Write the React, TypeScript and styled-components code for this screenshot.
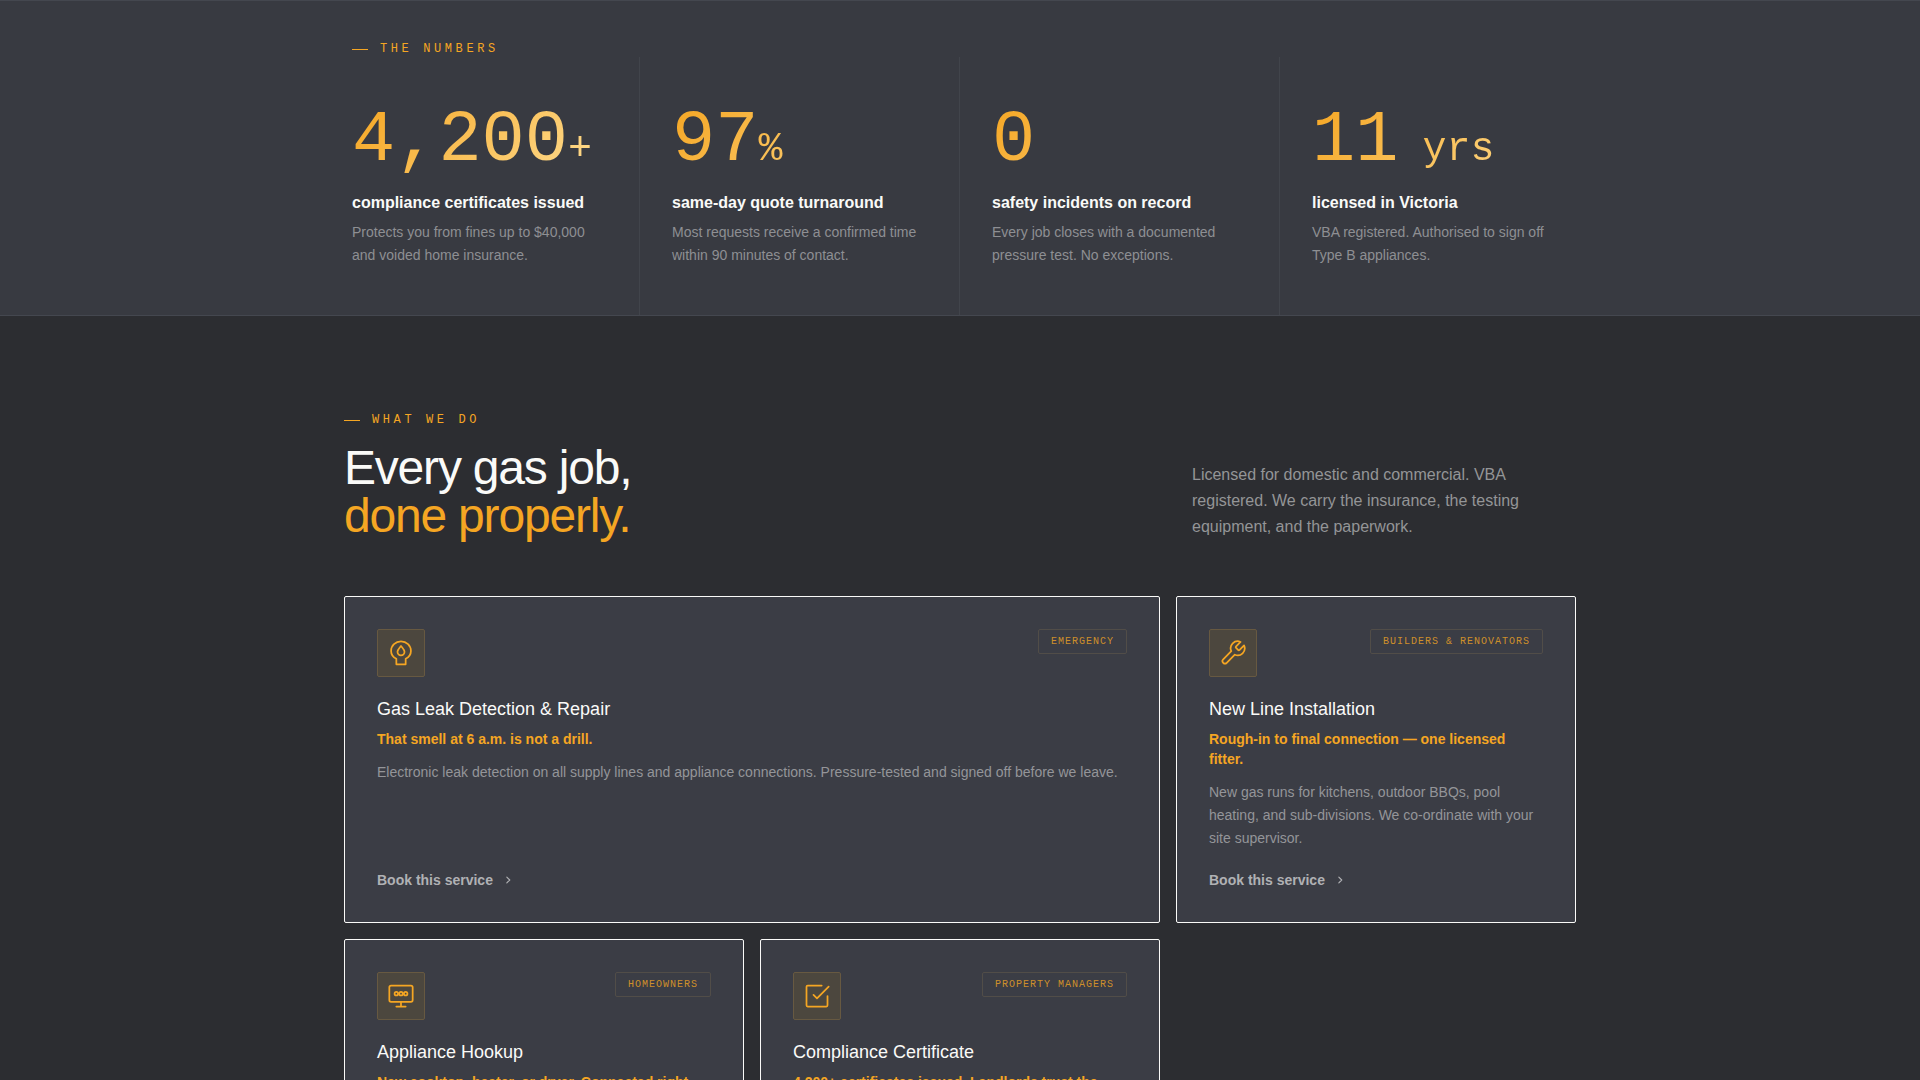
import React from "react";
import styled, { createGlobalStyle } from "styled-components";

const sans = `"Liberation Sans", Arial, sans-serif`;
const mono = `"Liberation Mono", "Courier New", monospace`;
const amber = "#f5a623";

const GlobalStyle = createGlobalStyle`
  *, *::before, *::after { box-sizing: border-box; }
  body {
    margin: 0;
    background: #2c2d31;
    color: #fafaf8;
    font-family: ${sans};
  }
  h2, h3, p { margin: 0; font-weight: 400; }
`;

const Eyebrow = styled.p`
  display: flex;
  align-items: center;
  gap: 12px;
  color: ${amber};
  font-family: ${mono};
  font-size: 12px;
  line-height: 16px;
  letter-spacing: 0.3em;
  text-transform: uppercase;

  &::before {
    content: "";
    width: 16px;
    height: 1px;
    background: ${amber};
  }
`;

const NumbersBand = styled.section`
  background: #383a41;
  border-top: 1px solid #44474f;
  border-bottom: 1px solid #44474f;
  padding-top: 40px;
`;

const NumbersInner = styled.div`
  max-width: 1280px;
  margin: 0 auto;

  & > ${Eyebrow} { padding: 0 32px; }
`;

const StatGrid = styled.div`
  display: grid;
  grid-template-columns: repeat(4, 1fr);
`;

const Stat = styled.article`
  padding: 48px 32px;
  border-right: 1px solid #41444b;

  &:last-child { border-right: 0; }
`;

const Figure = styled.div`
  font-family: ${mono};
  font-size: 72px;
  line-height: 72px;
  white-space: pre;
  background: linear-gradient(135deg, #f5a623 0%, #ffde94 100%);
  background-clip: text;
  -webkit-background-clip: text;
  color: transparent;
`;

const Unit = styled.span`
  font-size: 40px;
  line-height: 40px;
`;

const StatTitle = styled.h3`
  margin-top: 14px;
  font-size: 16px;
  font-weight: 700;
  line-height: 24px;
`;

const StatText = styled.p`
  margin-top: 6px;
  color: #8e8f93;
  font-size: 14px;
  line-height: 23px;
`;

const Services = styled.section`
  max-width: 1280px;
  margin: 0 auto;
  padding: 96px 24px;
`;

const ServicesHeader = styled.header`
  display: flex;
  align-items: flex-end;
  justify-content: space-between;
  margin-bottom: 56px;
`;

const Heading = styled.h2`
  margin-top: 16px;
  font-size: 48px;
  line-height: 48px;
  letter-spacing: -0.025em;
`;

const HeadingAccent = styled.span`
  display: block;
  color: ${amber};
`;

const Intro = styled.p`
  width: 384px;
  color: #949597;
  font-size: 16px;
  line-height: 26px;
`;

const CardGrid = styled.div`
  display: grid;
  grid-template-columns: repeat(3, 1fr);
  gap: 16px;
`;

const Card = styled.article<{ $wide?: boolean }>`
  display: flex;
  flex-direction: column;
  grid-column: span ${(p) => (p.$wide ? 2 : 1)};
  padding: 32px;
  background: #3b3d45;
  border: 1px solid #fafaf8;
  border-radius: 2px;
`;

const CardTop = styled.div`
  display: flex;
  align-items: flex-start;
  justify-content: space-between;
  margin-bottom: 20px;
`;

const IconBox = styled.div`
  display: grid;
  place-items: center;
  width: 48px;
  height: 48px;
  background: #4c473e;
  border: 1px solid #675941;
  border-radius: 2px;
  color: ${amber};
`;

const Tag = styled.span`
  padding: 4px 12px;
  border: 1px solid #514d48;
  border-radius: 2px;
  color: rgba(245, 166, 35, 0.8);
  font-family: ${mono};
  font-size: 10px;
  line-height: 15px;
  letter-spacing: 0.1em;
  text-transform: uppercase;
`;

const CardTitle = styled.h3`
  font-size: 18px;
  line-height: 24px;
`;

const CardHook = styled.p`
  margin-top: 8px;
  color: ${amber};
  font-size: 14px;
  font-weight: 700;
  line-height: 20px;
`;

const CardText = styled.p`
  margin: 12px 0 20px;
  color: #949599;
  font-size: 14px;
  line-height: 23px;
`;

const BookLink = styled.a`
  display: inline-flex;
  align-items: center;
  align-self: flex-start;
  gap: 8px;
  margin-top: auto;
  color: #b0b1b4;
  font-size: 14px;
  font-weight: 700;
  line-height: 20px;
  text-decoration: none;
`;

const Icon = ({ size = 28, width = 1.5, children }: { size?: number; width?: number; children: React.ReactNode }) => (
  <svg
    width={size}
    height={size}
    viewBox="0 0 24 24"
    fill="none"
    stroke="currentColor"
    strokeWidth={width}
    strokeLinecap="round"
    strokeLinejoin="round"
    aria-hidden="true"
  >
    {children}
  </svg>
);

const icons = {
  leak: (
    <>
      <path d="M12 2C7.3 2 3.5 5.7 3.5 10.2c0 3 1.7 5.3 4.5 6.8v4.7h8V17c2.8-1.5 4.5-3.8 4.5-6.8C20.5 5.7 16.7 2 12 2z" />
      <path d="M12 6c-1.6 2-3 3.4-3 5a3 3 0 0 0 6 0c0-1.6-1.4-3-3-5z" />
    </>
  ),
  wrench: (
    <path d="M14.7 6.3a1 1 0 0 0 0 1.4l1.6 1.6a1 1 0 0 0 1.4 0l3.77-3.77a6 6 0 0 1-7.94 7.94l-6.91 6.91a2.12 2.12 0 0 1-3-3l6.91-6.91a6 6 0 0 1 7.94-7.94l-3.76 3.76z" />
  ),
  appliance: (
    <>
      <rect x="2" y="3" width="20" height="14" rx="1.5" />
      <path d="M8 21h8M12 17v4" />
      <circle cx="8" cy="10" r="1.5" />
      <circle cx="12" cy="10" r="1.5" />
      <circle cx="16" cy="10" r="1.5" />
    </>
  ),
  certificate: (
    <>
      <path d="M9 11l3 3L22 4" />
      <path d="M21 12v8a1 1 0 0 1-1 1H4a1 1 0 0 1-1-1V4a1 1 0 0 1 1-1h12" />
    </>
  ),
};

const stats = [
  { figure: "4,200", unit: "+", title: "compliance certificates issued", text: "Protects you from fines up to $40,000 and voided home insurance." },
  { figure: "97", unit: "%", title: "same-day quote turnaround", text: "Most requests receive a confirmed time within 90 minutes of contact." },
  { figure: "0", unit: "", title: "safety incidents on record", text: "Every job closes with a documented pressure test. No exceptions." },
  { figure: "11", unit: " yrs", title: "licensed in Victoria", text: "VBA registered. Authorised to sign off Type B appliances." },
];

const services = [
  {
    icon: icons.leak,
    tag: "Emergency",
    title: "Gas Leak Detection & Repair",
    hook: "That smell at 6 a.m. is not a drill.",
    text: "Electronic leak detection on all supply lines and appliance connections. Pressure-tested and signed off before we leave.",
    wide: true,
  },
  {
    icon: icons.wrench,
    tag: "Builders & Renovators",
    title: "New Line Installation",
    hook: "Rough-in to final connection — one licensed fitter.",
    text: "New gas runs for kitchens, outdoor BBQs, pool heating, and sub-divisions. We co-ordinate with your site supervisor.",
  },
  {
    icon: icons.appliance,
    tag: "Homeowners",
    title: "Appliance Hookup",
    hook: "New cooktop, heater, or dryer. Connected right.",
  },
  {
    icon: icons.certificate,
    tag: "Property Managers",
    title: "Compliance Certificate",
    hook: "4,200+ certificates issued. Landlords trust the",
  },
];

export default function App() {
  return (
    <main>
      <GlobalStyle />
      <NumbersBand>
        <NumbersInner>
          <Eyebrow>The Numbers</Eyebrow>
          <StatGrid>
            {stats.map((s) => (
              <Stat key={s.title}>
                <Figure>
                  {s.figure}
                  {s.unit && <Unit>{s.unit}</Unit>}
                </Figure>
                <StatTitle>{s.title}</StatTitle>
                <StatText>{s.text}</StatText>
              </Stat>
            ))}
          </StatGrid>
        </NumbersInner>
      </NumbersBand>

      <Services>
        <ServicesHeader>
          <div>
            <Eyebrow>What we do</Eyebrow>
            <Heading>
              Every gas job,
              <HeadingAccent>done properly.</HeadingAccent>
            </Heading>
          </div>
          <Intro>
            Licensed for domestic and commercial. VBA registered. We carry the insurance, the testing equipment, and the
            paperwork.
          </Intro>
        </ServicesHeader>
        <CardGrid>
          {services.map((s) => (
            <Card key={s.title} $wide={s.wide}>
              <CardTop>
                <IconBox>
                  <Icon>{s.icon}</Icon>
                </IconBox>
                <Tag>{s.tag}</Tag>
              </CardTop>
              <CardTitle>{s.title}</CardTitle>
              <CardHook>{s.hook}</CardHook>
              {s.text && <CardText>{s.text}</CardText>}
              {s.text && (
                <BookLink href="#book">
                  Book this service
                  <Icon size={14} width={2}>
                    <path d="M10 17l5-5-5-5" />
                  </Icon>
                </BookLink>
              )}
            </Card>
          ))}
        </CardGrid>
      </Services>
    </main>
  );
}
